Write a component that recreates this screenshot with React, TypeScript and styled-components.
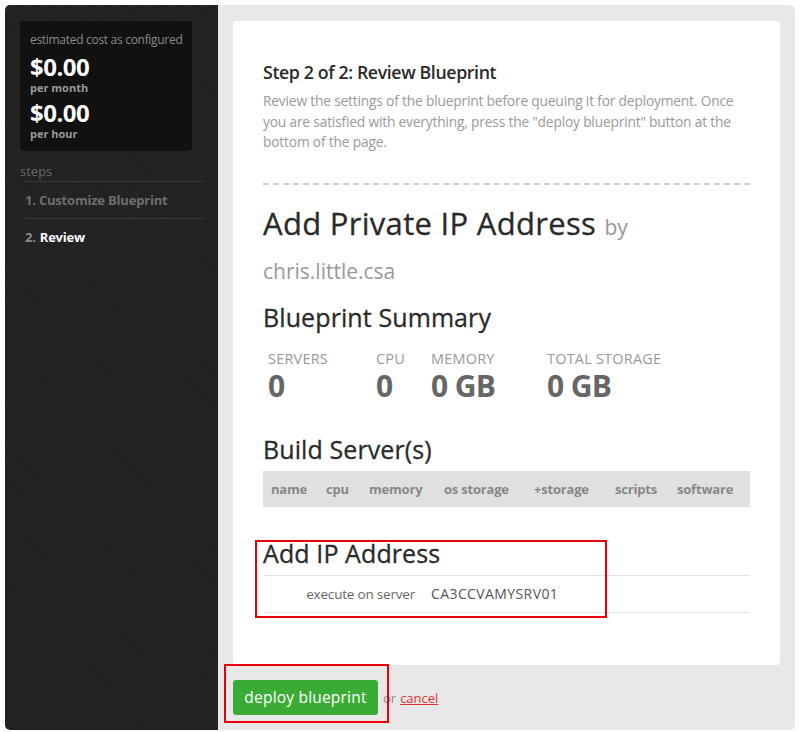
import React from "react";
import styled, { createGlobalStyle } from "styled-components";

const GlobalStyle = createGlobalStyle`
  html, body { margin: 0; padding: 0; background: #ffffff; }
  body { font-family: "Open Sans", "Noto Sans", Arial, sans-serif; }
  * { box-sizing: border-box; }
`;

const Frame = styled.div`
  margin: 5px 0 0 5px;
  width: 790px;
  height: 725px;
  display: flex;
  border-radius: 5px;
  overflow: hidden;
`;

const Sidebar = styled.aside`
  width: 213px;
  flex: none;
  background-color: #232323;
  background-image: repeating-linear-gradient(45deg, rgba(255,255,255,0.012) 0 1px, transparent 1px 3px),
    repeating-linear-gradient(-45deg, rgba(0,0,0,0.08) 0 1px, transparent 1px 3px);
  padding: 16px 15px 0 15px;
`;

const CostBox = styled.div`
  background: #111111;
  border-radius: 4px;
  width: 172px;
  height: 130px;
  padding: 11px 10px 0 10px;
`;

const CostCaption = styled.div`
  font-size: 12px;
  line-height: 16px;
  color: #8a8a8a;
  letter-spacing: -0.3px;
  white-space: nowrap;
`;

const CostValue = styled.div<{ $gap?: number }>`
  margin-top: ${(p) => p.$gap ?? 6}px;
  font-size: 24px;
  line-height: 24px;
  font-weight: 700;
  color: #ffffff;
  letter-spacing: -0.5px;
`;

const CostUnit = styled.div`
  font-size: 11px;
  line-height: 14px;
  font-weight: 700;
  color: #9a9a9a;
  margin-top: 2px;
`;

const StepsLabel = styled.div`
  margin-top: 12px;
  font-size: 13px;
  line-height: 16px;
  color: #666;
`;

const StepList = styled.ul`
  list-style: none;
  margin: 2px 0 0 5px;
  padding: 0;
`;

const StepItem = styled.li`
  border-top: 1px solid #3a3a3a;
  height: 37px;
  display: flex;
  align-items: center;
  font-size: 13px;
  font-weight: 700;
  color: #6e6e6e;
  letter-spacing: -0.2px;
`;

const StepNum = styled.span`
  color: #8a8a8a;
  margin-right: 4px;
`;

const StepCurrent = styled.span`
  color: #ffffff;
`;

const Main = styled.main`
  flex: 1;
  background: #e8e8e8;
  padding: 16px 15px 0 15px;
`;

const Card = styled.section`
  background: #fff;
  border-radius: 3px;
  height: 644px;
  padding: 40px 30px 0 30px;
  color: #333;
`;

const StepTitle = styled.h2`
  margin: 0;
  font-size: 17.8px;
  line-height: 22px;
  font-weight: 600;
  color: #2a2a2a;
  letter-spacing: -0.4px;
`;

const Intro = styled.p`
  margin: 8px 0 0 0;
  font-size: 13.8px;
  line-height: 20.5px;
  color: #9a9a9a;
  letter-spacing: -0.2px;
`;

const Dashed = styled.hr`
  margin: 30px 0 0 0;
  border: 0;
  border-top: 2px dashed #d0d0d0;
  height: 0;
`;

const BlueprintTitle = styled.h1`
  margin: 16px 0 0 0;
  font-size: 31px;
  line-height: 44px;
  font-weight: 400;
  color: #2a2a2a;
  letter-spacing: 0.3px;
  -webkit-text-stroke: 0.3px #2a2a2a;
`;

const Author = styled.span`
  font-size: 21px;
  line-height: 20px;
  color: #999;
  font-weight: 400;
  letter-spacing: 0;
  -webkit-text-stroke: 0;
`;

const SectionTitle = styled.h3<{ $top: number }>`
  margin: ${(p) => p.$top}px 0 0 0;
  font-size: 25px;
  line-height: 30px;
  font-weight: 400;
  color: #2a2a2a;
  letter-spacing: 0.1px;
  -webkit-text-stroke: 0.3px #2a2a2a;
`;

const Stats = styled.div`
  margin-top: 18px;
  padding-left: 5px;
  display: grid;
  grid-template-columns: 108px 55px 116px auto;
`;

const StatLabel = styled.div`
  font-size: 14.5px;
  line-height: 18px;
  color: #999;
  text-transform: uppercase;
  letter-spacing: 0.2px;
`;

const StatValue = styled.div`
  font-size: 30px;
  line-height: 30px;
  font-weight: 700;
  color: #666;
  letter-spacing: -0.6px;
  margin-top: 3px;
`;

const ServerTable = styled.table`
  margin-top: 7px;
  width: 100%;
  border-collapse: collapse;
  table-layout: fixed;
`;

const HeadCell = styled.th<{ $w?: number }>`
  background: #e0e0e0;
  height: 36px;
  padding: 0 0 0 8px;
  text-align: left;
  font-size: 13px;
  font-weight: 700;
  color: #888;
  letter-spacing: -0.2px;
  width: ${(p) => (p.$w ? `${p.$w}px` : "auto")};
  white-space: nowrap;
`;

const Marked = styled.div`
  position: relative;
`;

const Callout = styled.div<{ $l: number; $t: number; $w: number; $h: number }>`
  position: absolute;
  left: ${(p) => p.$l}px;
  top: ${(p) => p.$t}px;
  width: ${(p) => p.$w}px;
  height: ${(p) => p.$h}px;
  border: 2px solid #e8000b;
  pointer-events: none;
`;

const ScriptRow = styled.div`
  margin-top: 7px;
  border-top: 1px solid #e2e2e2;
  border-bottom: 1px solid #e2e2e2;
  height: 38px;
  display: flex;
  align-items: center;
  font-size: 13.5px;
  letter-spacing: -0.2px;
`;

const ScriptKey = styled.span`
  width: 168px;
  text-align: right;
  padding-right: 16px;
  color: #666;
`;

const ScriptVal = styled.span`
  color: #555;
  font-size: 14px;
  letter-spacing: 0.4px;
`;

const Footer = styled.div`
  margin-top: 15px;
  display: flex;
  align-items: center;
  font-size: 13px;
  color: #888;
`;

const DeployButton = styled.button`
  height: 35px;
  width: 145px;
  background: #3aac35;
  border: 0;
  border-radius: 3px;
  color: #fff;
  font-family: inherit;
  font-size: 15.5px;
  letter-spacing: 0.2px;
  padding: 0 0 1px 0;
  cursor: pointer;
`;

const OrText = styled.span`
  margin-left: 5px;
`;

const CancelLink = styled.a`
  margin-left: 4px;
  color: #e03131;
  text-decoration: underline;
`;

export default function App() {
  return (
    <>
      <GlobalStyle />
      <Frame>
        <Sidebar>
          <CostBox>
            <CostCaption>estimated cost as configured</CostCaption>
            <CostValue $gap={7}>$0.00</CostValue>
            <CostUnit>per month</CostUnit>
            <CostValue $gap={6}>$0.00</CostValue>
            <CostUnit>per hour</CostUnit>
          </CostBox>
          <StepsLabel>steps</StepsLabel>
          <StepList>
            <StepItem>1. Customize Blueprint</StepItem>
            <StepItem>
              <StepNum>2.</StepNum>
              <StepCurrent>Review</StepCurrent>
            </StepItem>
          </StepList>
        </Sidebar>
        <Main>
          <Card>
            <StepTitle>Step 2 of 2: Review Blueprint</StepTitle>
            <Intro>
              Review the settings of the blueprint before queuing it for deployment. Once
              you are satisfied with everything, press the "deploy blueprint" button at the
              bottom of the page.
            </Intro>
            <Dashed />
            <BlueprintTitle>
              Add Private IP Address <Author>by chris.little.csa</Author>
            </BlueprintTitle>
            <SectionTitle $top={13}>Blueprint Summary</SectionTitle>
            <Stats>
              <StatLabel>Servers</StatLabel>
              <StatLabel>CPU</StatLabel>
              <StatLabel>Memory</StatLabel>
              <StatLabel>Total Storage</StatLabel>
              <StatValue>0</StatValue>
              <StatValue>0</StatValue>
              <StatValue>0 GB</StatValue>
              <StatValue>0 GB</StatValue>
            </Stats>
            <SectionTitle $top={33}>Build Server(s)</SectionTitle>
            <ServerTable>
              <thead>
                <tr>
                  <HeadCell $w={55}>name</HeadCell>
                  <HeadCell $w={43}>cpu</HeadCell>
                  <HeadCell $w={75}>memory</HeadCell>
                  <HeadCell $w={90}>os storage</HeadCell>
                  <HeadCell $w={81}>+storage</HeadCell>
                  <HeadCell $w={62}>scripts</HeadCell>
                  <HeadCell>software</HeadCell>
                </tr>
              </thead>
            </ServerTable>
            <Marked>
              <SectionTitle $top={31}>Add IP Address</SectionTitle>
              <ScriptRow>
                <ScriptKey>execute on server</ScriptKey>
                <ScriptVal>CA3CCVAMYSRV01</ScriptVal>
              </ScriptRow>
              <Callout $l={-8} $t={2} $w={352} $h={78} />
            </Marked>
          </Card>
          <Footer>
            <Marked>
              <DeployButton>deploy blueprint</DeployButton>
              <Callout $l={-9} $t={-16} $w={165} $h={59} />
            </Marked>
            <OrText>or</OrText>
            <CancelLink href="#">cancel</CancelLink>
          </Footer>
        </Main>
      </Frame>
    </>
  );
}
